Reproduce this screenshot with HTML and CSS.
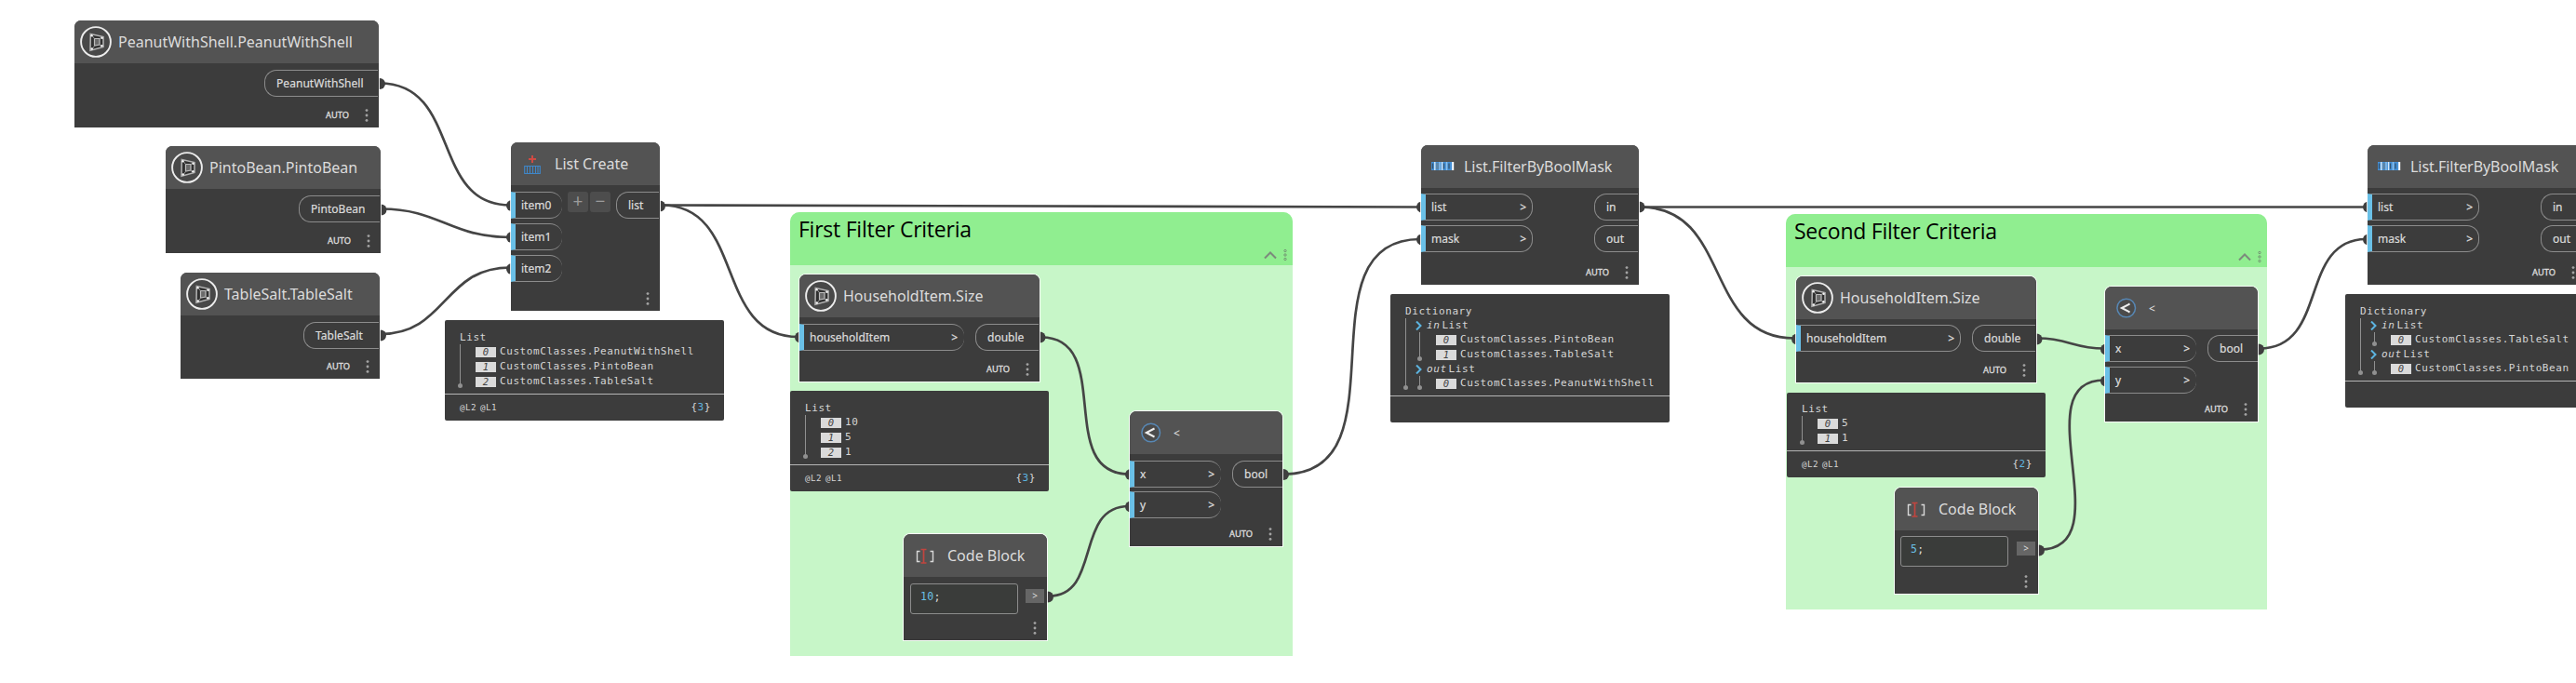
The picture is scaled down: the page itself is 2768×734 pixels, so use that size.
FILE: index.html
```html
<!DOCTYPE html>
<html lang="en">
<head>
<meta charset="utf-8">
<title>Filter graph</title>
<link rel="stylesheet" href="styles.css">
</head>
<body>
<svg class="defs" width="0" height="0">
  <symbol id="i-custom" viewBox="0 0 46 46">
    <circle cx="23" cy="23" r="15.9" fill="#484848" stroke="#ececec" stroke-width="1.9"/>
    <path d="M17.3 14.500 31 17.500V28.500L17 32.300Z" fill="#303030" stroke="#b4b4b4" stroke-width="1.500"/>
    <path d="M21.500 19.500h5.500v6.500l-5.500 1z" fill="#6a6a6a" stroke="#bdbdbd" stroke-width="1.200"/>
    <path d="M17.500 14.500l4 5M31 17.500l-4 2M31 28.500l-4-2M17.500 32.500l4-5" stroke="#9a9a9a" fill="none"/>
    <g fill="#f2f2f2"><circle cx="18.500" cy="16.300" r="1.200"/><circle cx="29.600" cy="18.700" r="1.200"/><circle cx="18.700" cy="30.500" r="1.200"/><circle cx="29.400" cy="27.300" r="1.200"/></g>
  </symbol>
  <symbol id="i-list" viewBox="0 0 46 46">
    <path d="M23 14v8M19 18h8" stroke="#cf4a43" stroke-width="2"/>
    <path d="M14.700 25.500h16.600v8H14.700zM17.500 25v9M20.500 25v9M23.500 25v9M26.500 25v9M29 25v9" fill="none" stroke="#3f87c9" stroke-width="1.100"/>
  </symbol>
  <symbol id="i-mask" viewBox="0 0 46 46">
    <rect x="11" y="18" width="24" height="9" fill="#4590d6"/>
    <path d="M12.500 19.500v6M24.500 19.500v6M30 19.500v6" stroke="#35536e" stroke-width="1.300" fill="none"/>
    <path d="M17.500 19v7" stroke="#5a86ab" stroke-width="3"/>
    <path d="M14.800 18v9M22.600 18v9" stroke="#d6e8f7" stroke-width="1.400"/>
    <path d="M20 18v9M27.500 18v9" stroke="#8fc0e8" stroke-width="1.400"/>
    <path d="M34.200 18v9" stroke="#fff" stroke-width="2"/>
  </symbol>
  <symbol id="i-less" viewBox="0 0 46 46">
    <circle cx="22.700" cy="23" r="9.800" fill="#4b4b4b" stroke="#5787b4" stroke-width="1.500"/>
    <path d="M26.500 18.500 17.800 23l8.700 4.500" fill="none" stroke="#eee" stroke-width="2"/>
  </symbol>
  <symbol id="i-code" viewBox="0 0 46 46">
    <path d="M17.500 18.500H14.500v11h3M28.500 18.500h3v11h-3" fill="none" stroke="#d8d8d8" stroke-width="1.400"/>
    <path d="M18.500 16.500h6M18.500 31h6M21.500 16.500V31" stroke="#c2453f" stroke-width="1.700"/>
  </symbol>
  <symbol id="i-dots" viewBox="0 0 4 14">
    <circle cx="2" cy="1.600" r="1.450"/><circle cx="2" cy="7" r="1.450"/><circle cx="2" cy="12.400" r="1.450"/>
  </symbol>
</svg>

<main class="canvas">
  <section class="group group-first">
    <header class="group-head"><h2>First Filter Criteria</h2>
      <svg class="group-tools" viewBox="0 0 26 14"><path d="M1 10.500 7 4.500l6 6" fill="none" stroke="#7c8a7c" stroke-width="2"/><g fill="none" stroke="#6f8f6f" stroke-width=".9"><circle cx="23" cy="2.500" r="1.200"/><circle cx="23" cy="7" r="1.200"/><circle cx="23" cy="11.500" r="1.200"/></g></svg>
    </header>
  </section>
  <section class="group group-second">
    <header class="group-head"><h2>Second Filter Criteria</h2>
      <svg class="group-tools" viewBox="0 0 26 14"><path d="M1 10.500 7 4.500l6 6" fill="none" stroke="#7c8a7c" stroke-width="2"/><g fill="none" stroke="#6f8f6f" stroke-width=".9"><circle cx="23" cy="2.500" r="1.200"/><circle cx="23" cy="7" r="1.200"/><circle cx="23" cy="11.500" r="1.200"/></g></svg>
    </header>
  </section>

  <svg class="wires" viewBox="0 0 2768 734">
    <g class="wire">
      <path d="M408 89.500C496 89.500 462 220.500 548 220.500"/>
      <path d="M410 224.500C472 224.500 484 255 548 255"/>
      <path d="M409 359C480 359 476 287.500 548 287.500"/>
      <path d="M711 220.500L1526 222.500"/>
      <path d="M711 220.500C802 220.500 766 362 858 362"/>
      <path d="M1119 362.500C1198 362.500 1133 509.500 1213 509.500"/>
      <path d="M1127 640.500C1184 640.500 1154 544 1213 544"/>
      <path d="M1380 509.500C1512 509.500 1394 257 1526 257"/>
      <path d="M1763 222.500H2543"/>
      <path d="M1763 222.500C1861 222.500 1830 363.500 1928 363.500"/>
      <path d="M2190 363.500C2222 363.500 2228 374.500 2261 374.500"/>
      <path d="M2192 590.500C2281 590.500 2173 408.500 2261 408.500"/>
      <path d="M2428 374.500C2503 374.500 2469 257 2543 257"/>
    </g>
    <g class="plug">
      <circle cx="408" cy="90" r="6"/><circle cx="409.500" cy="225.500" r="6"/><circle cx="409" cy="360.500" r="6"/>
      <circle cx="550" cy="221" r="6"/><circle cx="550" cy="255" r="6"/><circle cx="550" cy="289" r="6"/>
      <circle cx="709" cy="221.500" r="6"/><circle cx="860" cy="362.500" r="6"/><circle cx="1117.500" cy="362.500" r="6"/>
      <circle cx="1215" cy="510" r="6"/><circle cx="1215" cy="544.500" r="6"/><circle cx="1126" cy="641.500" r="6"/>
      <circle cx="1379" cy="510" r="6"/><circle cx="1528" cy="222.500" r="6"/><circle cx="1528" cy="257.500" r="6"/>
      <circle cx="1761.500" cy="222.500" r="6"/><circle cx="1931" cy="364.500" r="6"/><circle cx="2188.500" cy="364.500" r="6"/>
      <circle cx="2263" cy="375.500" r="6"/><circle cx="2263" cy="409.500" r="6"/><circle cx="2191" cy="591.500" r="6"/>
      <circle cx="2427" cy="375.500" r="6"/><circle cx="2545" cy="222.500" r="6"/><circle cx="2545" cy="257.500" r="6"/>
    </g>
  </svg>

  <article class="node peanut">
    <header class="head"><svg class="icon"><use href="#i-custom"/></svg><h3>PeanutWithShell.PeanutWithShell</h3></header>
    <div class="ports"><div class="outs"><span class="out w122">PeanutWithShell</span></div></div>
    <footer class="foot"><span>AUTO</span><svg class="dots"><use href="#i-dots"/></svg></footer>
  </article>
  <article class="node pinto">
    <header class="head"><svg class="icon"><use href="#i-custom"/></svg><h3>PintoBean.PintoBean</h3></header>
    <div class="ports"><div class="outs"><span class="out w87">PintoBean</span></div></div>
    <footer class="foot"><span>AUTO</span><svg class="dots"><use href="#i-dots"/></svg></footer>
  </article>
  <article class="node salt">
    <header class="head"><svg class="icon"><use href="#i-custom"/></svg><h3>TableSalt.TableSalt</h3></header>
    <div class="ports"><div class="outs"><span class="out w81">TableSalt</span></div></div>
    <footer class="foot"><span>AUTO</span><svg class="dots"><use href="#i-dots"/></svg></footer>
  </article>

  <article class="node create">
    <header class="head"><svg class="icon"><use href="#i-list"/></svg><h3>List Create</h3></header>
    <div class="ports">
      <div class="ins w55"><span class="in open">item0</span><span class="in open">item1</span><span class="in open">item2</span></div>
      <div class="steps"><span>+</span><span>−</span></div>
      <div class="outs"><span class="out w46">list</span></div>
    </div>
    <footer class="foot"><svg class="dots"><use href="#i-dots"/></svg></footer>
  </article>
  <article class="watch watch-create">
    <div class="tree"><p class="label">List</p>
      <ul class="rows"><li><i>0</i>CustomClasses.PeanutWithShell</li><li><i>1</i>CustomClasses.PintoBean</li><li><i>2</i>CustomClasses.TableSalt</li></ul>
    </div>
    <footer class="levels"><small>@L2</small><small>@L1</small><span class="count">{<b>3</b>}</span></footer>
  </article>

  <article class="node size-a">
    <header class="head"><svg class="icon"><use href="#i-custom"/></svg><h3>HouseholdItem.Size</h3></header>
    <div class="ports">
      <div class="ins w177"><span class="in open">householdItem<b>&gt;</b></span></div>
      <div class="outs"><span class="out w68">double</span></div>
    </div>
    <footer class="foot"><span>AUTO</span><svg class="dots"><use href="#i-dots"/></svg></footer>
  </article>
  <article class="watch watch-size-a">
    <div class="tree"><p class="label">List</p>
      <ul class="rows"><li><i>0</i>10</li><li><i>1</i>5</li><li><i>2</i>1</li></ul>
    </div>
    <footer class="levels"><small>@L2</small><small>@L1</small><span class="count">{<b>3</b>}</span></footer>
  </article>

  <article class="node less-a">
    <header class="head"><svg class="icon"><use href="#i-less"/></svg><h3 class="op">&lt;</h3></header>
    <div class="ports">
      <div class="ins w98"><span class="in open">x<b>&gt;</b></span><span class="in open">y<b>&gt;</b></span></div>
      <div class="outs flush"><span class="out w54">bool</span></div>
    </div>
    <footer class="foot"><span>AUTO</span><svg class="dots"><use href="#i-dots"/></svg></footer>
  </article>
  <article class="node code-a">
    <header class="head"><svg class="icon"><use href="#i-code"/></svg><h3>Code Block</h3></header>
    <div class="code"><code><b>10</b>;</code><span class="run">&gt;</span></div>
    <footer class="foot"><svg class="dots"><use href="#i-dots"/></svg></footer>
  </article>

  <article class="node mask-a tight">
    <header class="head"><svg class="icon"><use href="#i-mask"/></svg><h3>List.FilterByBoolMask</h3></header>
    <div class="ports">
      <div class="ins w120"><span class="in">list<b>&gt;</b></span><span class="in">mask<b>&gt;</b></span></div>
      <div class="outs"><span class="out w47">in</span><span class="out w47">out</span></div>
    </div>
    <footer class="foot"><span>AUTO</span><svg class="dots"><use href="#i-dots"/></svg></footer>
  </article>
  <article class="watch watch-mask-a">
    <div class="tree"><p class="label">Dictionary</p>
      <div class="entries">
        <p class="key"><svg viewBox="0 0 7 10"><path d="M1 .5 5.500 5 1 9.500"/></svg><em>in</em>List</p>
        <ul class="rows"><li><i>0</i>CustomClasses.PintoBean</li><li><i>1</i>CustomClasses.TableSalt</li></ul>
        <p class="key"><svg viewBox="0 0 7 10"><path d="M1 .5 5.500 5 1 9.500"/></svg><em>out</em>List</p>
        <ul class="rows"><li><i>0</i>CustomClasses.PeanutWithShell</li></ul>
      </div>
    </div>
    <footer class="levels"></footer>
  </article>

  <article class="node size-b tight">
    <header class="head"><svg class="icon"><use href="#i-custom"/></svg><h3>HouseholdItem.Size</h3></header>
    <div class="ports">
      <div class="ins w177"><span class="in">householdItem<b>&gt;</b></span></div>
      <div class="outs"><span class="out w68">double</span></div>
    </div>
    <footer class="foot"><span>AUTO</span><svg class="dots"><use href="#i-dots"/></svg></footer>
  </article>
  <article class="watch watch-size-b">
    <div class="tree"><p class="label">List</p>
      <ul class="rows"><li><i>0</i>5</li><li><i>1</i>1</li></ul>
    </div>
    <footer class="levels"><small>@L2</small><small>@L1</small><span class="count">{<b>2</b>}</span></footer>
  </article>

  <article class="node less-b tight">
    <header class="head"><svg class="icon"><use href="#i-less"/></svg><h3 class="op">&lt;</h3></header>
    <div class="ports">
      <div class="ins w98"><span class="in open">x<b>&gt;</b></span><span class="in open">y<b>&gt;</b></span></div>
      <div class="outs flush"><span class="out w54">bool</span></div>
    </div>
    <footer class="foot"><span>AUTO</span><svg class="dots"><use href="#i-dots"/></svg></footer>
  </article>
  <article class="node code-b tight">
    <header class="head"><svg class="icon"><use href="#i-code"/></svg><h3>Code Block</h3></header>
    <div class="code"><code><b>5</b>;</code><span class="run">&gt;</span></div>
    <footer class="foot"><svg class="dots"><use href="#i-dots"/></svg></footer>
  </article>

  <article class="node mask-b tight">
    <header class="head"><svg class="icon"><use href="#i-mask"/></svg><h3>List.FilterByBoolMask</h3></header>
    <div class="ports">
      <div class="ins w120"><span class="in">list<b>&gt;</b></span><span class="in">mask<b>&gt;</b></span></div>
      <div class="outs"><span class="out w47">in</span><span class="out w47">out</span></div>
    </div>
    <footer class="foot"><span>AUTO</span><svg class="dots"><use href="#i-dots"/></svg></footer>
  </article>
  <article class="watch watch-mask-b">
    <div class="tree"><p class="label">Dictionary</p>
      <div class="entries">
        <p class="key"><svg viewBox="0 0 7 10"><path d="M1 .5 5.500 5 1 9.500"/></svg><em>in</em>List</p>
        <ul class="rows"><li><i>0</i>CustomClasses.TableSalt</li></ul>
        <p class="key"><svg viewBox="0 0 7 10"><path d="M1 .5 5.500 5 1 9.500"/></svg><em>out</em>List</p>
        <ul class="rows"><li><i>0</i>CustomClasses.PintoBean</li></ul>
      </div>
    </div>
    <footer class="levels"></footer>
  </article>
</main>
</body>
</html>
```
FILE: styles.css
```css
* { box-sizing: border-box; margin: 0; padding: 0; }
body { background: #fff; font-family: "Noto Sans", "Open Sans", sans-serif; }
ul { list-style: none; }
.defs { position: absolute; }
.canvas { position: relative; width: 2768px; height: 734px; overflow: hidden; }

/* Groups */
.group { position: absolute; background: #c7f6c8; border-radius: 10px 10px 0 0; overflow: hidden; }
.group-first { left: 849px; top: 228px; width: 540px; height: 477px; }
.group-second { left: 1919px; top: 230px; width: 517px; height: 425px; }
.group-head { height: 57px; background: #90ee90; display: flex; justify-content: space-between; padding: 2px 5px 4px 9px; }
.group-head h2 { font: 400 23px/32px "Open Sans", "Noto Sans", sans-serif; letter-spacing: -0.25px; color: #000; white-space: nowrap; }
.group-tools { width: 26px; height: 14px; align-self: flex-end; }

/* Wires */
.wires { position: absolute; left: 0; top: 0; width: 2768px; height: 734px; }
.wire { fill: none; stroke: #454545; stroke-width: 2.7; }
.plug { fill: #3f3f3f; }

/* Nodes */
.node { position: absolute; display: flex; flex-direction: column; background: #3c3c3c; border-radius: 7px 7px 0 0; box-shadow: 0 0 0 1px rgba(255,255,255,.85); color: #dcdcdc; white-space: nowrap; }
.peanut { left: 80px; top: 22px; width: 327px; height: 115px; }
.pinto { left: 178px; top: 157px; width: 231px; height: 115px; }
.salt { left: 194px; top: 293px; width: 214px; height: 114px; }
.create { left: 549px; top: 153px; width: 160px; height: 181px; }
.size-a { left: 859px; top: 295px; width: 258px; height: 115px; }
.less-a { left: 1214px; top: 442px; width: 164px; height: 145px; }
.code-a { left: 971px; top: 574px; width: 154px; height: 114px; }
.mask-a { left: 1527px; top: 156px; width: 234px; height: 150px; }
.size-b { left: 1930px; top: 297px; width: 258px; height: 114px; }
.less-b { left: 2262px; top: 308px; width: 164px; height: 145px; }
.code-b { left: 2036px; top: 524px; width: 154px; height: 114px; }
.mask-b { left: 2544px; top: 156px; width: 234px; height: 150px; }

.head { flex: none; height: 46px; display: flex; align-items: center; background: #535353; border-radius: 7px 7px 0 0; }
.icon { width: 46px; height: 46px; flex: none; }
.head h3 { font-size: 16px; font-weight: 400; line-height: 46px; margin-left: 1px; }
.mask-a h3, .mask-b h3 { margin-left: 0; letter-spacing: -0.05px; }
.head .op { font-size: 12px; font-weight: 500; padding-top: 1px; }

.ports { display: flex; align-items: flex-start; padding-top: 7px; }
.tight .ports { padding-top: 6px; }
.ins { display: flex; flex-direction: column; gap: 5px; }
.less-a .ins { gap: 4px; }
.outs { display: flex; flex-direction: column; gap: 5px; margin-left: auto; margin-right: 1px; }
.flush { margin-right: 0; }
.in, .out { display: flex; align-items: center; height: 29px; border: 1px solid #8c8c8c; font-size: 12px; line-height: 27px; -webkit-text-stroke: .2px #dcdcdc; }
.in { justify-content: space-between; border-left: 5px solid #6ac0e7; border-radius: 0 13px 13px 0; padding: 0 6px; }
.in b { font-weight: 500; }
.in.open { border-right: 0; padding-right: 7px; }
.out { border-right: 0; border-radius: 13px 0 0 13px; padding-left: 12px; }
.w46 { width: 46px; } .w47 { width: 47px; } .w54 { width: 54px; } .w55 { width: 55px; }
.w68 { width: 68px; } .w81 { width: 81px; } .w87 { width: 87px; } .w98 { width: 98px; }
.w120 { width: 120px; } .w122 { width: 122px; } .w177 { width: 177px; }
.w122, .w87, .w81 { letter-spacing: .05px; }
.steps { display: flex; gap: 2px; margin-left: 6px; }
.steps span { width: 22px; height: 22px; background: #4d4d4d; border-radius: 3px; color: #9b9b9b; font-size: 19px; line-height: 20px; text-align: center; }

.foot { height: 27px; margin-top: auto; display: flex; align-items: center; justify-content: flex-end; gap: 17px; padding-right: 11px; font-size: 9.3px; -webkit-text-stroke: .35px #dcdcdc; }
.dots { width: 4px; height: 14px; fill: #a3a3a3; stroke: none; }

.code { display: flex; align-items: flex-start; padding: 7px 3px 0 7px; }
.code-b .code { padding-left: 6px; padding-top: 6px; }
.code code { width: 116px; height: 33px; border: 1px solid #8c8c8c; border-radius: 3px; padding-left: 10px; background: #3a3c3a; font: 11.500px/27px "DejaVu Sans Mono", monospace; letter-spacing: .3px; }
.code code b { color: #6ac0e7; font-weight: 400; }
.run { width: 20px; height: 15px; margin: 6px 0 0 auto; background: #666; font-size: 10px; line-height: 14px; text-align: center; }

/* Value previews */
.watch { position: absolute; display: flex; flex-direction: column; background: #3c3c3c; border-radius: 2px; color: #d6d6d6; font: 11px/16px "DejaVu Sans Mono", monospace; letter-spacing: .58px; white-space: nowrap; }
.watch-create { left: 478px; top: 344px; width: 300px; height: 108px; }
.watch-size-a { left: 849px; top: 420px; width: 278px; height: 108px; }
.watch-mask-a { left: 1494px; top: 316px; width: 300px; height: 138px; }
.watch-size-b { left: 1920px; top: 422px; width: 278px; height: 91px; }
.watch-mask-b { left: 2520px; top: 316px; width: 300px; height: 122px; }
.tree { padding: 11px 0 0 16px; }
.watch-size-b .tree { padding-top: 10px; }
.label, .key { line-height: 15px; height: 15px; }
.rows, .entries { position: relative; }
.rows li { display: flex; align-items: center; height: 16px; padding-left: 17px; }
.rows i { width: 22px; height: 11px; margin-right: 4px; background: #dadada; color: #444; font-size: 10.500px; line-height: 11px; text-align: center; letter-spacing: 0; }
.entries .rows { margin-left: 15px; }
.entries .rows li { padding-left: 18px; }
.rows::before, .entries::before { content: ""; position: absolute; left: 0; top: 0; bottom: 5px; width: 1px; background: #909090; }
.rows::after, .entries::after { content: ""; position: absolute; left: -2px; bottom: 1px; width: 5px; height: 5px; border-radius: 50%; background: #909090; }
.key { display: flex; align-items: center; padding-left: 11px; }
.key svg { width: 7px; height: 10px; margin-right: 5px; fill: none; stroke: #5cb4e0; stroke-width: 2; }
.key em { margin-right: 2px; }
.levels { height: 29px; margin-top: auto; border-top: 1px solid #b5b5b5; display: flex; align-items: center; gap: 4px; padding: 0 14px 0 16px; }
.levels small { font-size: 9.200px; letter-spacing: .45px; }
.count { margin-left: auto; }
.count b { color: #5cb4e0; font-weight: 400; }
```
